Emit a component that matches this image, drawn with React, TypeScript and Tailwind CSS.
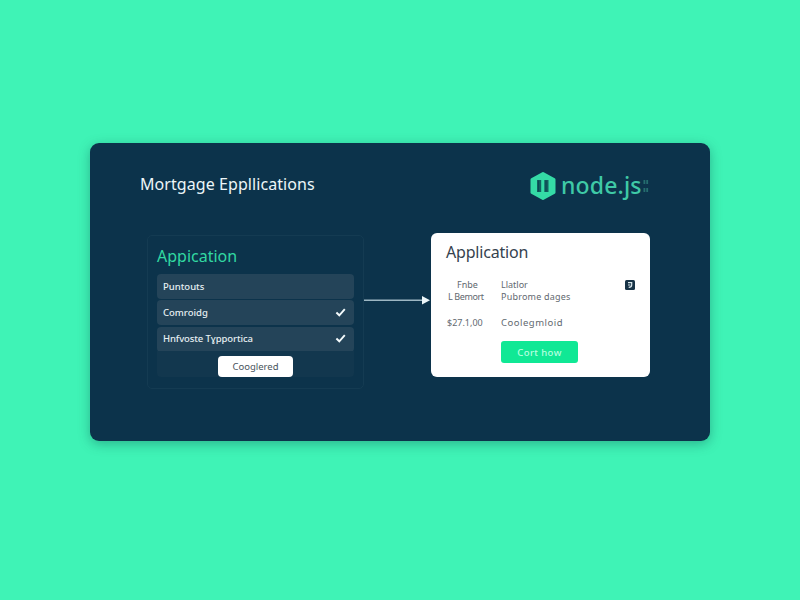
import React from "react";

const rowBase =
  "flex h-[25px] items-center justify-between rounded-[4px] bg-[#244459] pl-[6px] pr-[8px] text-[#e6eff2]";

function Check() {
  return (
    <svg width="11" height="10" viewBox="0 0 11 10" fill="none">
      <path d="M1.4 4.5 4.3 7.3 9.8 1.2" stroke="#f4fbfc" strokeWidth="1.9" />
    </svg>
  );
}

function NodeLogo() {
  return (
    <div className="flex h-[32px] items-center">
      <svg width="26" height="30" viewBox="0 0 26 30" fill="none">
        <path
          d="M13 2.5 24 8.5V21.5L13 27.5 2 21.5V8.5Z"
          fill="#35dba6"
          stroke="#35dba6"
          strokeWidth="3"
          strokeLinejoin="round"
        />
        <path d="M7 9h4.2v12H7zM14.3 9h4.2v12h-4.2z" fill="#12605f" />
        <path d="M8.6 9.5v11M16 9.5v11" stroke="#0c4552" strokeWidth="1" />
      </svg>
      <span className="mb-[2px] ml-[5px] w-[82px] whitespace-nowrap font-['Noto_Sans',sans-serif] text-[23px] font-medium leading-[30px] tracking-[0.15px] text-[#3fc9a6]">
        node.js
      </span>
      <svg width="6" height="14" viewBox="0 0 6 14" fill="none" stroke="#3fa894" strokeWidth="1.1">
        <path d="M.5 2h1.8M3.3 2h1.8M.5 4h1.8M3.3 4h1.8M.5 10h1.8M3.3 10h1.8M.5 12h1.8M3.3 12h1.8" />
      </svg>
    </div>
  );
}

function ListPanel() {
  return (
    <section className="flex h-[154px] w-[217px] flex-col rounded-[5px] border border-[#143b52] pl-[9px] pr-[8px] pt-[9px] font-['Noto_Sans',sans-serif]">
      <h2 className="h-[28px] whitespace-nowrap text-[16px] leading-[22px] text-[#32d8a2]">Appication</h2>
      <div className="flex w-[197px] flex-col gap-[1.5px] pt-[0.5px]">
        <div className={rowBase}>
          <span className="pt-[2px] text-[9.5px] font-medium">Puntouts</span>
        </div>
        <div className={rowBase}>
          <span className="pt-[2px] text-[9.5px] font-medium">Comroidg</span>
          <Check />
        </div>
        <div className={rowBase}>
          <span className="pt-[1px] text-[9.5px] font-medium tracking-[-0.1px]">Hnfvoste Tɣpportica</span>
          <Check />
        </div>
        <div className="-mt-[2px] flex h-[26px] items-end justify-center rounded-b-[4px] bg-[#12374e]">
          <button className="h-[21px] w-[75px] rounded-[4px] bg-white text-[9.5px] leading-[20px] text-[#49545d]">
            Cooglered
          </button>
        </div>
      </div>
    </section>
  );
}

function DetailPanel() {
  return (
    <section className="flex h-[144px] w-[219px] flex-col rounded-[6px] bg-white pl-[15px] pr-[15px] pt-[7px] font-['Noto_Sans',sans-serif] text-[#626970]">
      <h2 className="h-[39px] whitespace-nowrap text-[16px] leading-[24px] tracking-[-0.2px] text-[#35424e]">
        Application
      </h2>
      <div className="flex h-[12px] items-center text-[9px] leading-[12px]">
        <span className="w-[55px] pl-[11px]">Fnbe</span>
        <span className="flex-1">Llatlor</span>
        <svg width="10" height="10" viewBox="0 0 10 10" fill="none">
          <rect width="10" height="10" rx="1.5" fill="#173346" />
          <path d="M3 2.7h3.7v2.2c0 1.5-1.2 2.4-3 2.5M3 5h2.4" stroke="#dce9ed" strokeWidth="1.2" />
        </svg>
      </div>
      <div className="flex h-[12px] text-[9px] leading-[12px]">
        <span className="w-[55px] whitespace-nowrap pl-[2px] tracking-[-0.4px]">L Bemort</span>
        <span className="tracking-[0.2px]">Pubrome dages</span>
      </div>
      <div className="mt-[14px] flex h-[12px] text-[9px] leading-[12px]">
        <span className="w-[55px] pl-[1px]">$27.1,00</span>
        <span className="text-[9.5px] tracking-[0.5px]">Coolegmloid</span>
      </div>
      <button className="ml-[55px] mt-[12px] h-[22px] w-[77px] rounded-[3px] bg-[#10e895] text-[9.5px] font-medium leading-[21px] tracking-[0.4px] text-[#b9ffe0]">
        Cort how
      </button>
    </section>
  );
}

export default function App() {
  return (
    <main className="flex h-[600px] w-[800px] justify-center bg-[#3ff3b6] pt-[143px]">
      <div className="flex h-[298px] w-[620px] flex-col rounded-[9px] bg-[#0c334b] shadow-[0_3px_12px_rgba(12,80,75,0.38)]">
        <header className="flex h-[90px] items-start justify-between pl-[50px] pr-[61px] pt-[27px]">
          <h1 className="whitespace-nowrap pt-[3px] font-['Noto_Sans',sans-serif] text-[16px] leading-[22px] tracking-[0.07px] text-[#edf6f8]">
            Mortgage Eppllications
          </h1>
          <NodeLogo />
        </header>
        <div className="flex items-start pl-[57px]">
          <div className="pt-[2px]">
            <ListPanel />
          </div>
          <svg className="mt-[62px] shrink-0" width="67" height="10" viewBox="0 0 67 10">
            <path d="M0 5.3h60" stroke="#9db7c3" strokeWidth="1.6" />
            <path d="M58 1.1 66 5.3 58 9.5Z" fill="#edf7fa" />
          </svg>
          <DetailPanel />
        </div>
      </div>
    </main>
  );
}
